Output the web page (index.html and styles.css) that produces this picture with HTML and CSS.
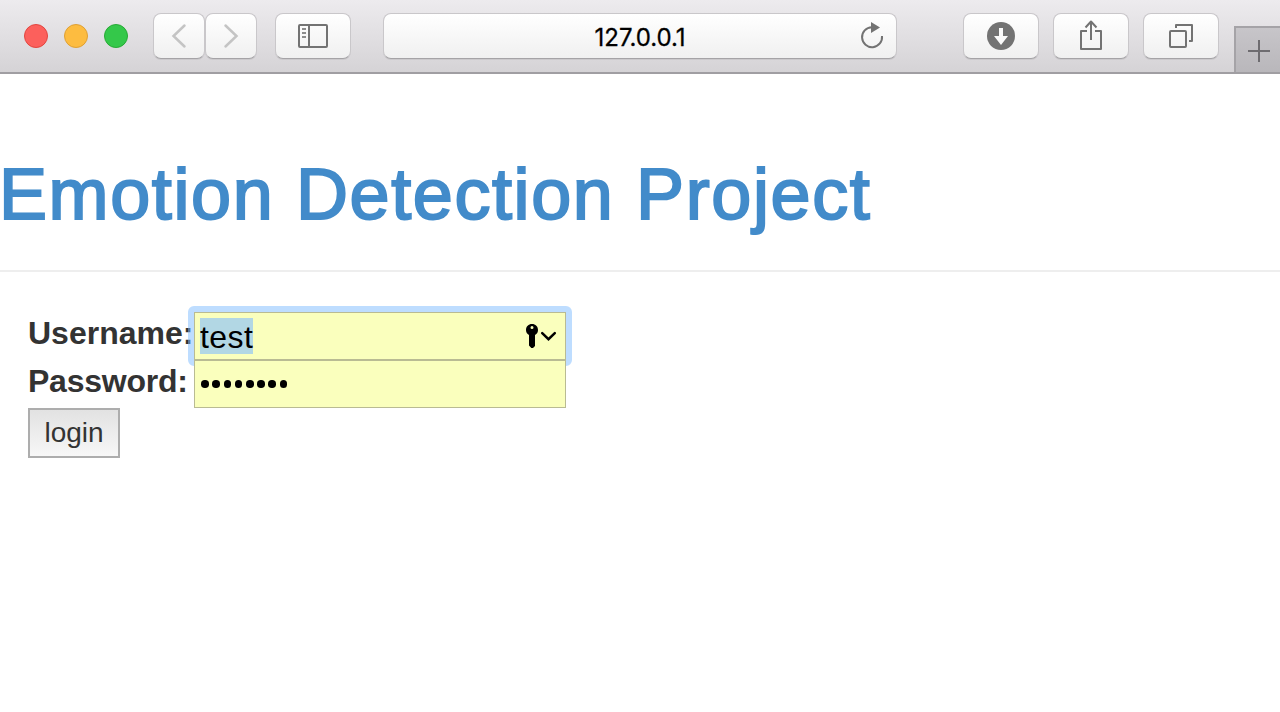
FILE: index.html
```html
<!DOCTYPE html>
<html lang="en">
<head>
<meta charset="utf-8">
<title>Emotion Detection Project</title>
<link rel="stylesheet" href="styles.css">
</head>
<body>
<header class="toolbar">
  <div class="lights"><span class="light red"></span><span class="light yellow"></span><span class="light green"></span></div>
  <div class="nav">
    <div class="btn small"><svg viewBox="153 13 52 46"><path class="chevron" d="M184.500 25.500 173.500 36l11 10.500"/></svg></div>
    <div class="btn small"><svg viewBox="205 13 52 46"><path class="chevron" d="M225.500 25.500 236.500 36l-11 10.500"/></svg></div>
  </div>
  <div class="btn sidebar"><svg viewBox="275 13 76 46"><rect class="line" x="299" y="25" width="28" height="22" rx="1"/><path class="line" d="M309 25v22"/><path class="rows" d="M302 29h4M302 33h4M302 37h4"/></svg></div>
  <div class="btn address"><span class="url">127.0.0.1</span>
    <svg class="reload" viewBox="855 13 36 46"><path class="line" d="M873 27.200h-1.200a10 10 0 1 0 10.200 8.800"/><path class="solid" d="M871 22v11l9-5.500z"/></svg>
  </div>
  <div class="tools">
    <div class="btn"><svg viewBox="963 13 76 46"><circle class="solid" cx="1001" cy="36" r="14"/><path class="arrow" d="M999 28h4v8h5l-7 9-7-9h5z"/></svg></div>
    <div class="btn"><svg viewBox="1053 13 76 46"><path class="line" d="M1087 31h-6v18h20V31h-6M1091 40V22M1085.500 27.500l5.500-6 5.500 6"/></svg></div>
    <div class="btn"><svg viewBox="1143 13 76 46"><rect class="line" x="1170" y="31" width="16" height="16" rx="1"/><path class="line" d="M1176 28v-3h16v16h-3"/></svg></div>
  </div>
  <div class="newtab"><svg viewBox="1236 28 44 44"><path d="M1248 51h22M1259 40v22"/></svg></div>
</header>
<main>
  <h1 class="title">Emotion Detection Project</h1>
  <form class="login">
    <div class="row">
      <label class="label">Username:</label>
      <div class="field focused"><span class="selected">test</span>
        <svg class="key" viewBox="520 318 40 36"><path class="keyshape" fill-rule="evenodd" d="M532 324c-3.500 0-6 2.500-6 6 0 2 1 4 3 5v10.500l2.300 2.500h1.700l2-2V335c2-1 3-3 3-5 0-3.500-2.500-6-6-6zm0 2a1.500 1.500 0 1 1 0 3 1.500 1.500 0 0 1 0-3z"/><path class="caret" d="M542.200 333.200l6.300 6 6.300-6"/></svg>
      </div>
    </div>
    <div class="row">
      <label class="label second">Password:</label>
      <div class="field password"><i></i><i></i><i></i><i></i><i></i><i></i><i></i><i></i></div>
    </div>
    <button class="submit" type="button">login</button>
  </form>
</main>
</body>
</html>
```
FILE: styles.css
```css
* { box-sizing: border-box; }
body { margin: 0; height: 712px; overflow: hidden; background: #fff; font-family: "Liberation Sans", Arial, sans-serif; color: #333; }
svg { display: block; }

.toolbar { display: flex; height: 74px; padding-top: 13px; align-items: flex-start; border-bottom: 2px solid #a09ea2; background: linear-gradient(#edebee, #d5d3d6); }
.lights { display: flex; gap: 16px; padding: 11px 0 0 24px; width: 153px; }
.light { width: 24px; height: 24px; border-radius: 50%; border: 1px solid; }
.red { background: #fc605c; border-color: #e2453f; }
.yellow { background: #fdbc40; border-color: #dfa034; }
.green { background: #34c84a; border-color: #27aa35; }
.nav { display: flex; }
.btn { width: 76px; height: 46px; border: 1px solid #c9c7ca; border-bottom-color: #a5a3a6; border-radius: 8px; background: linear-gradient(#fff, #f0f0f0); box-shadow: 0 1px 0 #cbc9cc; }
.btn svg { width: 76px; height: 46px; margin: -1px; }
.btn.small, .btn.small svg { width: 52px; }
.sidebar { margin-left: 18px; }
.chevron { fill: none; stroke: #c4c4c4; stroke-width: 2.5; stroke-linecap: round; stroke-linejoin: miter; }
.line { fill: none; stroke: #737373; stroke-width: 2; stroke-linejoin: round; }
.rows { stroke: #8c8c8c; stroke-width: 2; }
.solid { fill: #737373; }
.arrow { fill: #fafafa; }
.btn.address { display: flex; justify-content: flex-end; width: 514px; margin-left: 32px; }
.url { flex: 1; padding-left: 41px; text-align: center; font: 400 24px/48px Inter, sans-serif; letter-spacing: -0.05px; color: #000; -webkit-text-stroke: 0.3px #000; }
.btn .reload { width: 36px; margin: -1px 5px 0 0; }
.tools { display: flex; gap: 14px; margin-left: 66px; }
.newtab { width: 46px; height: 46px; margin: 13px 0 0 15px; border: solid #a5a3a7; border-width: 2px 0 0 2px; background: linear-gradient(#c7c5c9, #b9b7bb); }
.newtab svg { width: 44px; height: 44px; fill: none; stroke: #6e6c70; stroke-width: 2; }

.title { height: 198px; margin: 0; padding-top: 80px; border-bottom: 2px solid #eee; color: #428bca; font-size: 72px; line-height: 80px; font-weight: 400; letter-spacing: 1.6px; text-indent: -1px; white-space: nowrap; -webkit-text-stroke: 2px #428bca; }
.login { padding: 40px 0 0 28px; }
.row { display: flex; height: 48px; }
.label { width: 166px; font-size: 32px; font-weight: 700; line-height: 42px; white-space: nowrap; }
.second { letter-spacing: -0.25px; }
.field { display: flex; align-items: center; width: 372px; height: 48px; padding: 0 5px; border: 1px solid #b9bb93; background: #faffbd; position: relative; }
.focused { justify-content: space-between; }
.focused::before { content: ""; position: absolute; inset: -7px; border: 6px solid rgba(126, 188, 255, 0.5); border-radius: 6px; }
.selected { height: 36px; background: #b2d7e4; color: #000; font-size: 32px; line-height: 38px; letter-spacing: 0.4px; }
.key { width: 40px; height: 36px; }
.caret { fill: none; stroke: #000; stroke-width: 2.5; stroke-linecap: round; }
.password { gap: 3.7px; padding-left: 6.3px; }
.password i { width: 7.5px; height: 7.5px; border-radius: 50%; background: #000; }
.submit { display: block; width: 92px; height: 50px; padding: 0; border: 2px solid #adadad; background: linear-gradient(#e2e2e2, #f7f7f7); color: #333; font: 28px/46px "Liberation Sans", Arial, sans-serif; }
```
